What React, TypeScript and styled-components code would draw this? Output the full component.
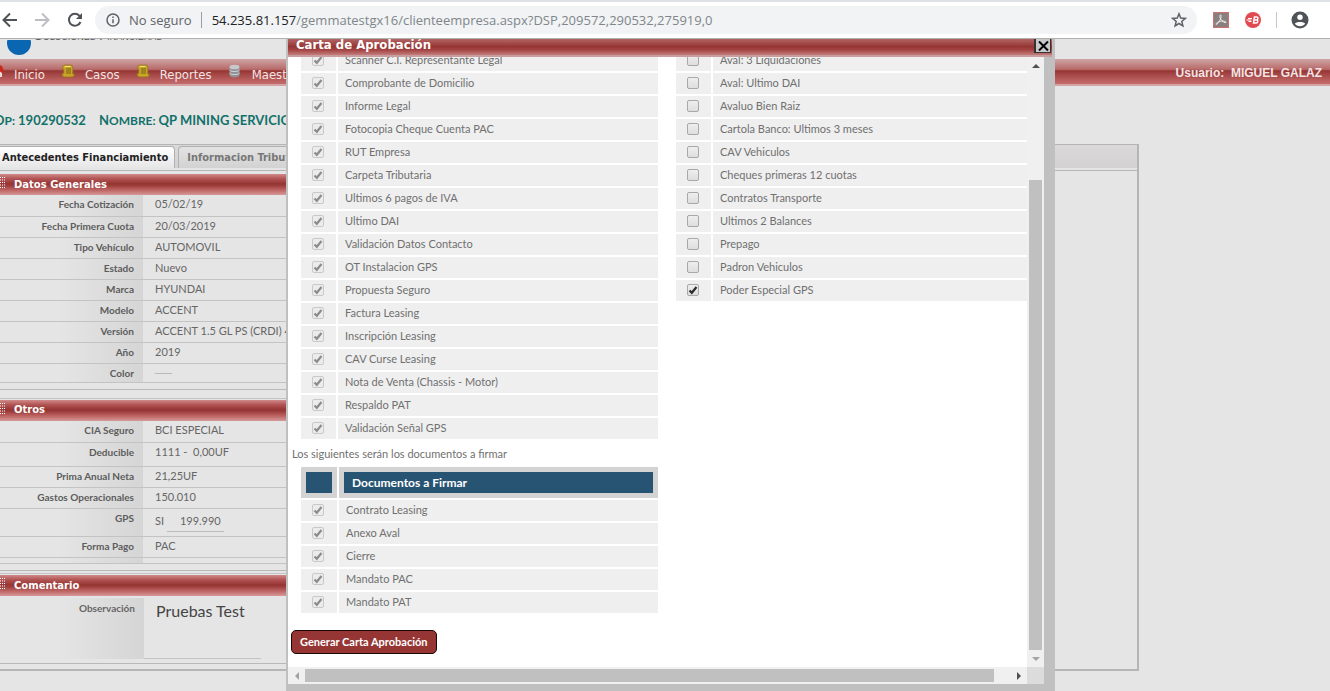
import React from "react";
import styled, { createGlobalStyle } from "styled-components";

const GlobalStyle = createGlobalStyle`
  * { box-sizing: border-box; }
  body { margin: 0; background: #e5e5e5; overflow: hidden; }
  button, input, textarea { font: inherit; color: inherit; }
`;

const sans = `Lato, "Liberation Sans", sans-serif`;
const wide = `"DejaVu Sans", "Liberation Sans", sans-serif`;
const condensed = `"DejaVu Sans Condensed", "DejaVu Sans", sans-serif`;
const bandGradient = "linear-gradient(#d08a8a 0%, #b35555 22%, #963634 46%, #9c3c3a 54%, #bd6463 76%, #d79999 100%)";

const Screen = styled.div`
  display: flex;
  flex-direction: column;
  height: 100vh;
  font: 11px/16px ${sans};
  color: #666;
`;

/* ---------- Browser toolbar ---------- */
const Toolbar = styled.header`
  display: flex;
  align-items: center;
  flex: none;
  height: 39px;
  padding: 4px 20px 4px 0;
  background: #fff;
  border-top: 2px solid #dee1e6;
  border-bottom: 1px solid #b0b0b0;
`;
const ToolButton = styled.button<{ $w?: number }>`
  display: grid;
  place-items: center;
  flex: none;
  width: ${(p) => p.$w ?? 32}px;
  height: 28px;
  padding: 0;
  border: 0;
  background: none;
`;
const AddressBar = styled.div`
  display: flex;
  align-items: center;
  flex: 1;
  min-width: 0;
  height: 28px;
  margin-left: 8px;
  padding: 0 8px 0 11px;
  border-radius: 14px;
  background: #f1f3f4;
  font: 13px/20px "Open Sans", sans-serif;
  color: #5f6368;
`;
const Security = styled.span`
  padding: 0 9px;
  border-right: 1px solid #9aa0a6;
  line-height: 16px;
  white-space: nowrap;
`;
const Url = styled.div`
  flex: 1;
  padding-left: 10px;
  color: #80868b;
  white-space: nowrap;
  overflow: hidden;
`;
const Host = styled.span`
  color: #202124;
`;
const Divider = styled.span`
  width: 1px;
  height: 16px;
  margin: 0 13px 0 15px;
  background: #c4c7cb;
`;

/* ---------- Page behind the dialog ---------- */
const Viewport = styled.div`
  position: relative;
  flex: 1;
  min-height: 0;
  overflow: hidden;
  background: #e5e5e5;
`;
const Brand = styled.div`
  display: flex;
  align-items: flex-end;
  height: 20px;
  padding: 0 0 4px 7px;
  overflow: hidden;
`;
const BrandName = styled.span`
  align-self: flex-start;
  margin: -11px 0 0 3px;
  font: small-caps 13px/16px "Liberation Sans", sans-serif;
  color: #555;
`;
const MenuBar = styled.nav`
  display: flex;
  align-items: center;
  height: 27px;
  margin-left: -10px;
  padding-right: 8px;
  background: linear-gradient(#cfa5a5 0%, #b86b6a 38%, #963634 44%, #a34645 56%, #bb6060 80%, #c56a6a 92%, #d3a3a3 94%);
  color: #f3e4e4;
`;
const MenuLink = styled.a`
  display: flex;
  align-items: center;
  gap: 10px;
  margin-right: 16px;
  font: 13px/16px ${condensed};
  color: inherit;
  text-decoration: none;
  svg { margin-bottom: 4px; }
  span { padding-top: 4px; }
`;
const UserName = styled.strong`
  margin-left: auto;
  font: bold 12px/16px "Liberation Sans", sans-serif;
  white-space: pre;
`;
const CaseTitle = styled.h1`
  display: flex;
  gap: 13px;
  margin: 26px 0 15px -6px;
  font: bold 13px/17px ${sans};
  color: #12716a;
  white-space: nowrap;
`;
const CaseLabel = styled.span`
  display: inline-block;
  margin-right: 3px;
  font-size: 12px;
  text-transform: uppercase;
  &::first-letter { font-size: 13px; }
`;
const Workspace = styled.main`
  margin-right: 191px;
  border-top: 1px solid #b5b5b5;
  border-right: 2px solid #b5b5b5;
  border-bottom: 2px solid #b5b5b5;
`;
const Tabs = styled.div`
  display: flex;
  align-items: flex-end;
  gap: 3px;
  height: 23px;
  background: linear-gradient(#dcd9da, #d3d1d2);
`;
const Tab = styled.button<{ $active?: boolean }>`
  height: 22px;
  padding: 0 6px 0 ${(p) => (p.$active ? 2 : 8)}px;
  border: 1px solid #b0b0b0;
  border-left-width: ${(p) => (p.$active ? 0 : 1)}px;
  border-bottom: 0;
  border-radius: ${(p) => (p.$active ? "0 4px 0 0" : "4px 4px 0 0")};
  background: ${(p) => (p.$active ? "linear-gradient(#fff, #e6e6e6)" : "linear-gradient(#e3e3e3, #d2d2d2)")};
  font: bold 11px/16px ${condensed};
  color: ${(p) => (p.$active ? "#222" : "#777")};
  white-space: nowrap;
`;
const TabBody = styled.div`
  margin-top: 2px;
  padding: 3px 0 5px;
  border-top: 1px solid #b5b5b5;
`;
const Section = styled.section<{ $top?: number }>`
  margin: ${(p) => p.$top ?? 0}px 15% 0 0;
  padding: ${(p) => (p.$top ? 1 : 0)}px 0 6px;
  border-top: ${(p) => (p.$top ? 1 : 0)}px solid #c4c4c4;
  border-bottom: 1px solid #b8b8b8;
  &:last-child { padding-bottom: 4px; }
`;
const SectionTitle = styled.h2`
  display: flex;
  align-items: center;
  gap: 8px;
  height: 21px;
  margin: 0;
  background: ${bandGradient};
  font: bold 10px/16px ${wide};
  color: #fff;
  svg { margin-bottom: 4px; }
`;
const FieldTable = styled.table`
  width: 100%;
  border-collapse: collapse;
`;
const FieldRow = styled.tr<{ $h?: number }>`
  height: ${(p) => p.$h ?? 21}px;
  border-bottom: 1px solid #c3c3c3;
`;
const FieldName = styled.th`
  width: 143px;
  padding: 1px 9px 0 0;
  background: linear-gradient(90deg, #e5e5e5 40%, #d5d5d5);
  font: bold 10px/17px ${sans};
  color: #5c5c5c;
  text-align: right;
  vertical-align: top;
`;
const FieldValue = styled.td`
  padding: 1px 0 0 12px;
  line-height: 16px;
  vertical-align: top;
  white-space: nowrap;
`;
const Amount = styled.span`
  display: inline-block;
  margin-top: 3px;
  padding: 0 3px 2px 13px;
  border-bottom: 1px solid #bbb;
`;
const Dash = styled.span`
  color: #b0b0b0;
`;
const CommentRow = styled.div`
  display: flex;
  padding-top: 2px;
`;
const CommentLabel = styled.label`
  flex: none;
  width: 144px;
  padding: 2px 9px 0 0;
  background: linear-gradient(90deg, #e5e5e5 40%, #d5d5d5);
  font-size: 10px;
  font-weight: bold;
  text-align: right;
`;
const CommentBox = styled.textarea`
  width: 117px;
  height: 61px;
  padding: 3px 0 0 12px;
  border: 0;
  border-bottom: 1px solid #c3c3c3;
  background: none;
  resize: none;
  font: 16px/20px ${sans};
  color: #444;
`;

/* ---------- Dialog ---------- */
const Dialog = styled.div`
  position: absolute;
  top: 0;
  bottom: 0;
  left: 286px;
  right: 275px;
  display: flex;
  flex-direction: column;
  border: solid #c0c0c0;
  border-width: 0 3px 7px 2px;
  background: #c0c0c0;
`;
const DialogTitle = styled.div`
  display: flex;
  align-items: flex-start;
  justify-content: space-between;
  flex: none;
  height: 18px;
  padding: 0 1px 0 8px;
  background: linear-gradient(#b26565 0%, #963634 42%, #a24342 60%, #c07776 86%, #c79d9d 90%);
  h2 {
    margin: -3px 0 0;
    font: bold 13px/17px ${condensed};
    color: #fff;
  }
`;
const CloseButton = styled.button`
  display: grid;
  place-items: center;
  width: 17px;
  height: 14px;
  padding: 0;
  border: solid #333;
  border-width: 0 1px 1px 2px;
  background: #c8c8c8;
`;
const Frame = styled.div`
  display: grid;
  grid-template-columns: minmax(0, 1fr) 17px;
  grid-template-rows: minmax(0, 1fr) 17px;
  flex: 1;
  min-height: 0;
  margin-right: 8px;
  background: #dcdcdc;
`;
const Content = styled.div`
  overflow: hidden;
  background: #fff;
`;
const Columns = styled.div`
  display: flex;
  align-items: flex-start;
  gap: 18px;
  margin: -7px 0 0 13px;
`;
const DocTable = styled.table<{ $check?: number }>`
  flex: none;
  width: 361px;
  table-layout: fixed;
  border-collapse: separate;
  border-spacing: 2px;
  margin: -2px;
  th, td { padding: 0; }
  th:first-child, td:first-child { width: ${(p) => p.$check ?? 35}px; }
`;
const CheckCell = styled.td`
  height: 21px;
  background: #efefef;
`;
const TextCell = styled.td`
  background: #efefef;
  label { display: block; padding: 0 0 2px 7px; line-height: 16px; white-space: nowrap; color: #707070; }
`;
const Tick = styled.span`
  display: grid;
  width: 12px;
  margin: 0 auto 1px 11px;
  input, svg { grid-area: 1 / 1; }
  svg { pointer-events: none; }
`;
const Box = styled.input`
  appearance: none;
  width: 12px;
  height: 12px;
  margin: 0;
  border: 1px solid #a8a8a8;
  border-radius: 2px;
  background: linear-gradient(#eee, #dedede);
  &:disabled { border-color: #c9c9c9; background: #ececec; }
`;
const HeadCell = styled.th`
  height: 31px;
  border: 5px solid #d3d3d3;
  background: #285473;
  && { padding-left: ${(p) => (p.children ? 8 : 0)}px; }
  font: bold 12px/16px ${sans};
  color: #fff;
  text-align: left;
`;
const Note = styled.p`
  margin: 7px 0 5px 4px;
  color: #707070;
`;
const Indent = styled.div`
  margin-left: 13px;
`;
const PrimaryButton = styled.button`
  display: block;
  height: 24px;
  margin: 17px 0 0 3px;
  padding: 0 8px;
  border: 1px solid #1b0808;
  border-radius: 5px;
  background: #963634;
  font-weight: bold;
  font-size: 11px;
  color: #fff;
  white-space: nowrap;
`;
const ScrollBar = styled.div<{ $row?: boolean }>`
  display: flex;
  flex-direction: ${(p) => (p.$row ? "row" : "column")};
  background: #f0f0f0;
  padding: ${(p) => (p.$row ? "2px 0" : "0 2px")};
`;
const Arrow = styled.button`
  display: grid;
  place-items: center;
  flex: none;
  flex-basis: 17px;
  padding: 0;
  border: 0;
  background: none;
`;
const Thumb = styled.div<{ $before: number; $size: number; $after: number }>`
  flex: 1;
  display: flex;
  flex-direction: inherit;
  &::before { content: ""; flex: ${(p) => p.$before}; }
  &::after { content: ""; flex: ${(p) => p.$after}; }
  i { flex: ${(p) => p.$size}; background: #c0c0c0; }
`;

const Grip = () => (
  <svg width="6" height="13" aria-hidden>
    {[0, 1, 2].map((x) => [0, 1, 2, 3, 4].map((y) => (
      <rect key={`${x}-${y}`} x={x * 2} y={1 + y * 2.5} width="1" height="1" fill="#fff" />
    )))}
  </svg>
);
const Scroll = () => (
  <svg width="14" height="14" viewBox="0 0 14 14" aria-hidden>
    <path d="M4 1Q1.500 1 1.500 4v1h1.300v4.500H1.200Q.8 12.800 3.500 13H11q2.300 0 2.300-3h-1.500V3.500Q11.800 1 9.500 1z" fill="#c9a427" stroke="#94761b" strokeWidth=".8" />
    <path d="M5 5h5M5 7h5M5 9h5" stroke="#75601a" />
    <path d="M3.500 2.500h6" stroke="#f2dc7c" />
  </svg>
);
const House = () => (
  <svg width="14" height="14" viewBox="0 0 14 14" aria-hidden>
    <path d="M3 7h9v6H3z" fill="#e9dcd2" />
    <path d="M0 6 7 0l5 2 2 5-2 2-5-4-5 4z" fill="#c9281c" />
  </svg>
);
const Database = () => (
  <svg width="14" height="14" viewBox="0 0 14 14" aria-hidden>
    <path d="M1.500 3v8c0 1.500 2.200 2.500 5 2.500s5-1 5-2.500V3z" fill="#8f9296" />
    <ellipse cx="6.500" cy="3" rx="5" ry="2.300" fill="#c6c8cb" />
    <path d="M1.500 6c1 2 9 2 10 0M1.500 9c1 2 9 2 10 0" fill="none" stroke="#d9dadd" />
  </svg>
);

const menu = [
  { text: "Inicio", Icon: House },
  { text: "Casos", Icon: Scroll },
  { text: "Reportes", Icon: Scroll },
  { text: "Maestros", Icon: Database },
];

type Field = { name: string; value: React.ReactNode; h?: number };
const general: Field[] = [
  { name: "Fecha Cotización", value: "05/02/19" },
  { name: "Fecha Primera Cuota", value: "20/03/2019" },
  { name: "Tipo Vehículo", value: "AUTOMOVIL" },
  { name: "Estado", value: "Nuevo" },
  { name: "Marca", value: "HYUNDAI" },
  { name: "Modelo", value: "ACCENT" },
  { name: "Versión", value: "ACCENT 1.5 GL PS (CRDI) 4" },
  { name: "Año", value: "2019" },
  { name: "Color", value: <Dash>──</Dash>, h: 19 },
];
const others: Field[] = [
  { name: "CIA Seguro", value: "BCI ESPECIAL", h: 22 },
  { name: "Deducible", value: <>1111 -&nbsp; 0,00UF</>, h: 24 },
  { name: "Prima Anual Neta", value: "21,25UF" },
  { name: "Gastos Operacionales", value: "150.010" },
  { name: "GPS", value: <>SI <Amount>199.990</Amount></>, h: 28 },
  { name: "Forma Pago", value: "PAC" },
  { name: "", value: "", h: 6 },
];

const required = [
  "Scanner C.I. Representante Legal", "Comprobante de Domicilio", "Informe Legal",
  "Fotocopia Cheque Cuenta PAC", "RUT Empresa", "Carpeta Tributaria", "Ultimos 6 pagos de IVA",
  "Ultimo DAI", "Validación Datos Contacto", "OT Instalacion GPS", "Propuesta Seguro",
  "Factura Leasing", "Inscripción Leasing", "CAV Curse Leasing", "Nota de Venta (Chassis - Motor)",
  "Respaldo PAT", "Validación Señal GPS",
];
const optional = [
  "Aval: 3 Liquidaciones", "Aval: Ultimo DAI", "Avaluo Bien Raiz", "Cartola Banco: Ultimos 3 meses",
  "CAV Vehiculos", "Cheques primeras 12 cuotas", "Contratos Transporte", "Ultimos 2 Balances",
  "Prepago", "Padron Vehiculos", "Poder Especial GPS",
];
const toSign = ["Contrato Leasing", "Anexo Aval", "Cierre", "Mandato PAC", "Mandato PAT"];

function Fields({ rows }: { rows: Field[] }) {
  return (
    <FieldTable>
      <tbody>
        {rows.map((r, i) => (
          <FieldRow key={i} $h={r.h}>
            <FieldName as={r.name ? "th" : "td"}>{r.name}</FieldName>
            <FieldValue>{r.value}</FieldValue>
          </FieldRow>
        ))}
      </tbody>
    </FieldTable>
  );
}

function DocRows({ id, items, locked, checked }: { id: string; items: string[]; locked?: boolean; checked?: string[] }) {
  return (
    <tbody>
      {items.map((text, i) => {
        const on = locked || !!checked?.includes(text);
        return (
          <tr key={text}>
            <CheckCell>
              <Tick>
                <Box type="checkbox" id={`${id}${i}`} defaultChecked={on} disabled={locked} />
                {on && (
                  <svg width="12" height="12" viewBox="0 0 12 12" aria-hidden>
                    <path d="M2.500 6.500 4.800 8.800 9.500 3" fill="none" stroke={locked ? "#8c8c8c" : "#2b2b2b"} strokeWidth="2.200" />
                  </svg>
                )}
              </Tick>
            </CheckCell>
            <TextCell><label htmlFor={`${id}${i}`}>{text}</label></TextCell>
          </tr>
        );
      })}
    </tbody>
  );
}

export default function App() {
  return (
    <Screen>
      <GlobalStyle />
      <Toolbar>
        <ToolButton $w={22} aria-label="Atrás">
          <svg width="20" height="16" viewBox="0 0 20 16" fill="none" stroke="#4f5357" strokeWidth="2">
            <path d="M16 8H3M9 1.500 2.500 8 9 14.500" />
          </svg>
        </ToolButton>
        <ToolButton $w={40} aria-label="Adelante">
          <svg width="16" height="16" viewBox="0 0 16 16" fill="none" stroke="#bcbec1" strokeWidth="2">
            <path d="M1 8h13M8 1.500 14.500 8 8 14.500" />
          </svg>
        </ToolButton>
        <ToolButton $w={25} aria-label="Recargar">
          <svg width="16" height="16" viewBox="0 0 16 16" fill="none" stroke="#4f5357" strokeWidth="2">
            <path d="M13.500 10A6 6 0 1 1 12.500 3.800L14 5.300" />
            <path d="M15 1v6H9z" fill="#4f5357" stroke="none" />
          </svg>
        </ToolButton>
        <AddressBar>
          <svg width="14" height="14" viewBox="0 0 14 14" fill="none" stroke="#5f6368" strokeWidth="1.500">
            <circle cx="7" cy="7" r="6" />
            <path d="M7 6.200v4M7 3.500v1.500" />
          </svg>
          <Security>No seguro</Security>
          <Url><Host>54.235.81.157</Host>/gemmatestgx16/clienteempresa.aspx?DSP,209572,290532,275919,0</Url>
          <ToolButton $w={20} aria-label="Marcar">
            <svg width="16" height="16" viewBox="0 0 16 16" fill="none" stroke="#5f6368" strokeWidth="1.500">
              <path d="m8 1.800 1.700 4.300 4.600.3-3.500 3 1.100 4.500L8 11.500l-3.900 2.400 1.100-4.500-3.500-3 4.600-.3z" />
            </svg>
          </ToolButton>
        </AddressBar>
        <ToolButton $w={48} aria-label="PDF">
          <svg width="16" height="16" viewBox="0 0 16 16">
            <rect x=".5" y=".5" width="15" height="15" fill="#897f7f" stroke="#cf6f6f" />
            <path d="M7.500 3c1.500 0 .3 4-1 6S3.500 13 3 12.300c-.5-1 3-2.800 5.500-3.100s4.800.3 4.500 1.200C12.500 11.500 8 9 7 5.500 6.600 4 6.800 3 7.500 3z" fill="none" stroke="#f3eeee" />
          </svg>
        </ToolButton>
        <ToolButton $w={16} aria-label="Extensión">
          <svg width="16" height="16" viewBox="0 0 16 16">
            <circle cx="8" cy="8" r="8" fill="#e04a50" />
            <path d="M1.500 8h5M3 6.500h4M3.500 9.500h3" stroke="#fff" />
            <path d="M8.500 11 9.500 5h2.300c1.600 0 1.500 2.600 0 2.900 1.500.2 1.200 3.100-.6 3.100zM9.200 7.900h2.500" fill="none" stroke="#fff" strokeWidth="1.500" />
          </svg>
        </ToolButton>
        <Divider />
        <ToolButton $w={20} aria-label="Perfil">
          <svg width="18" height="18" viewBox="0 0 18 18">
            <circle cx="9" cy="9" r="8.500" fill="#4f5357" />
            <circle cx="9" cy="6.300" r="2.700" fill="#fff" />
            <path d="M3.800 12.800C5 10.500 13 10.500 14.200 12.800 12 16 6 16 3.800 12.800z" fill="#fff" />
          </svg>
        </ToolButton>
      </Toolbar>

      <Viewport>
        <Brand>
          <svg width="24" height="15" viewBox="0 0 24 15" aria-hidden><circle cx="12" cy="3" r="12" fill="#0a66b0" /></svg>
          <BrandName>Soluciones Financieras</BrandName>
        </Brand>
        <MenuBar>
          {menu.map(({ text, Icon }) => (
            <MenuLink href="#" key={text}><Icon /><span>{text}</span></MenuLink>
          ))}
          <UserName>{"Usuario:  MIGUEL GALAZ"}</UserName>
        </MenuBar>
        <CaseTitle>
          <span><CaseLabel>Op:</CaseLabel>190290532</span>
          <span><CaseLabel>Nombre:</CaseLabel>QP MINING SERVICIOS</span>
        </CaseTitle>
        <Workspace>
          <Tabs>
            <Tab $active>Antecedentes Financiamiento</Tab>
            <Tab>Informacion Tributaria</Tab>
          </Tabs>
          <TabBody>
            <Section>
              <SectionTitle><Grip />Datos Generales</SectionTitle>
              <Fields rows={general} />
            </Section>
            <Section $top={8}>
              <SectionTitle><Grip />Otros</SectionTitle>
              <Fields rows={others} />
            </Section>
            <Section $top={2}>
              <SectionTitle><Grip />Comentario</SectionTitle>
              <CommentRow>
                <CommentLabel htmlFor="obs">Observación</CommentLabel>
                <CommentBox id="obs" defaultValue="Pruebas Test" />
              </CommentRow>
            </Section>
          </TabBody>
        </Workspace>

        <Dialog role="dialog" aria-labelledby="dlg-title">
          <DialogTitle>
            <h2 id="dlg-title">Carta de Aprobación</h2>
            <CloseButton aria-label="Cerrar">
              <svg width="11" height="10" viewBox="0 0 11 10"><path d="M1 .5 10 9.500M10 .5 1 9.500" stroke="#000" strokeWidth="2" /></svg>
            </CloseButton>
          </DialogTitle>
          <Frame>
            <Content>
              <Columns>
                <DocTable><DocRows id="req" items={required} locked /></DocTable>
                <DocTable><DocRows id="opt" items={optional} checked={["Poder Especial GPS"]} /></DocTable>
              </Columns>
              <Note>Los siguientes serán los documentos a firmar</Note>
              <Indent>
                <DocTable $check={36}>
                  <thead><tr><HeadCell /><HeadCell>Documentos a Firmar</HeadCell></tr></thead>
                  <DocRows id="sign" items={toSign} locked />
                </DocTable>
              </Indent>
              <PrimaryButton>Generar Carta Aprobación</PrimaryButton>
            </Content>
            <ScrollBar>
              <Arrow aria-label="Arriba"><svg width="8" height="4"><path d="M0 4 4 0l4 4z" fill="#505050" /></svg></Arrow>
              <Thumb $before={106} $size={470} $after={0}><i /></Thumb>
              <Arrow aria-label="Abajo"><svg width="8" height="4"><path d="M0 0h8L4 4z" fill="#a3a3a3" /></svg></Arrow>
            </ScrollBar>
            <ScrollBar $row>
              <Arrow aria-label="Izquierda"><svg width="4" height="8"><path d="M4 0v8L0 4z" fill="#a3a3a3" /></svg></Arrow>
              <Thumb $before={0} $size={689} $after={16}><i /></Thumb>
              <Arrow aria-label="Derecha"><svg width="4" height="8"><path d="M0 0v8l4-4z" fill="#505050" /></svg></Arrow>
            </ScrollBar>
          </Frame>
        </Dialog>
      </Viewport>
    </Screen>
  );
}
